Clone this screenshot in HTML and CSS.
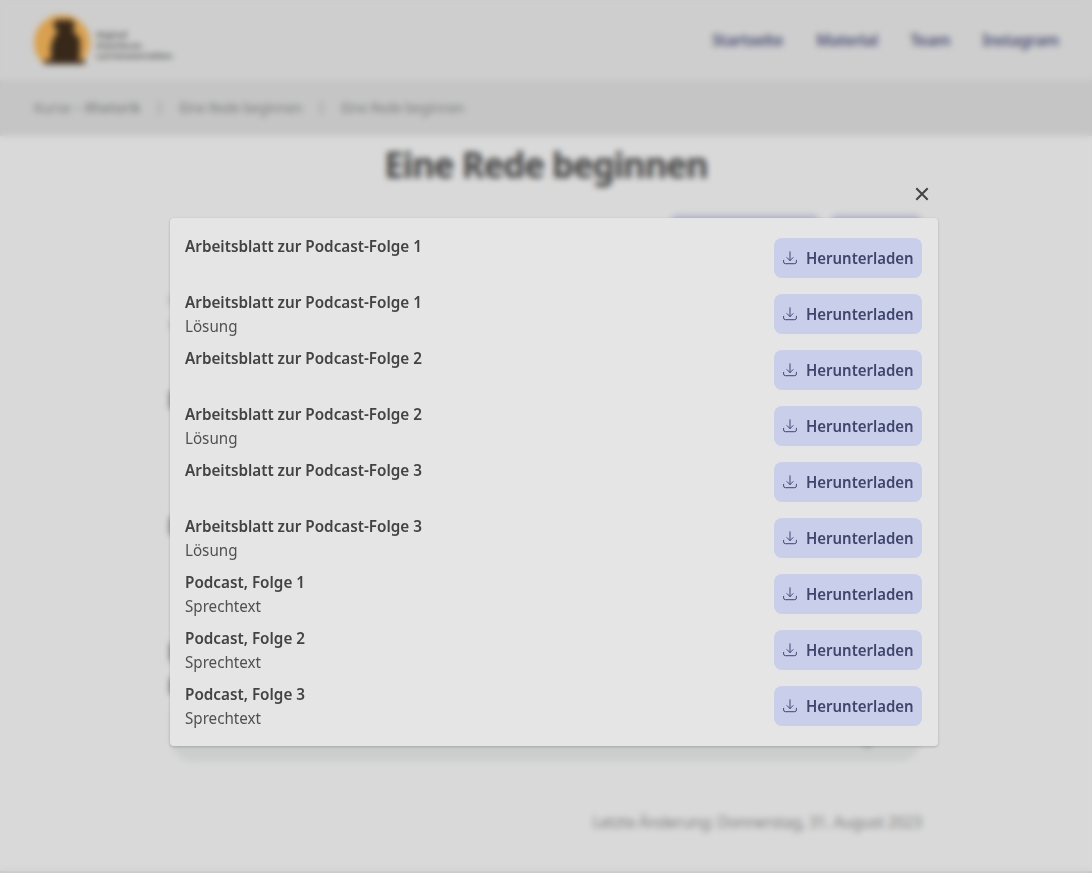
FILE: index.html
```html
<!DOCTYPE html>
<html lang="de">
<head>
<meta charset="utf-8">
<title>Eine Rede beginnen</title>
<link rel="stylesheet" href="styles.css">
</head>
<body>
<div class="page">
  <header class="header">
    <div class="logo">
      <svg width="58" height="52" viewBox="0 0 58 52"><path d="M9 48A28 28 0 1 1 47 48Z" fill="#d9a04f"/><path d="M10 49v-4h7V31l3-9 4-5-5-7 3-5h16l3 4-2 7 7 8v15l-2 6h7v4Z" fill="#37281a"/></svg>
      <div class="logo-text"><span>Digital</span><span>Plattform</span><span>Lernmaterialien</span></div>
    </div>
    <nav class="nav"><a class="n1">Startseite</a><a class="n2">Material</a><a class="n3">Team</a><a class="n4">Instagram</a></nav>
  </header>
  <div class="crumbs"><span class="c1">Kurse – <b>Rhetorik</b></span><i></i><span class="c2">Eine Rede beginnen</span><i></i><span class="c3">Eine Rede beginnen</span></div>
  <main class="main">
    <h1>Eine Rede beginnen</h1>
    <div class="actions"><span class="action wide"></span><span class="action"></span></div>
    <div class="content">
      <i class="edge e1"></i><i class="edge e2"></i><i class="edge e3 dark"></i><i class="edge e4 dark"></i><i class="edge e5 dark"></i><i class="edge e6 dark"></i>
    </div>
    <div class="card"><i></i></div>
    <p class="changed">Letzte Änderung: Donnerstag, 31. August 2023</p>
  </main>
  <footer class="footer"></footer>
</div>
<div class="overlay">
  <div class="dialog">
    <button class="close" aria-label="Schließen"><svg width="14" height="14" viewBox="0 0 14 14"><path d="M1.3 1.3 12.7 12.7M12.7 1.3 1.3 12.7"/></svg></button>
    <ul class="panel" id="files"></ul>
  </div>
</div>
<script src="app.js"></script>
</body>
</html>
```

FILE: styles.css
```css
* { box-sizing: border-box; }
body { margin: 0; height: 873px; overflow: hidden; background: #d9d9d9; color: #434343; font: 16px/24px "Noto Sans", sans-serif; }
.page { height: 873px; overflow: hidden; display: flex; flex-direction: column; }
.header { flex: 0 0 80px; background: #cecece; display: flex; justify-content: space-between; align-items: center; padding: 0 34px; }
.logo { display: flex; align-items: center; gap: 4px; padding-top: 1px; }
.logo-text { display: flex; flex-direction: column; font-size: 9.5px; line-height: 10.5px; font-weight: 700; color: #666; padding-top: 11px; }
.nav { display: flex; gap: 31px; font-weight: 700; color: #5c607f; }
.nav a { white-space: nowrap; letter-spacing: -.75px; }
.n1 { width: 73px; } .n2 { width: 63px; } .n3 { width: 41px; } .n4 { width: 76px; }
.crumbs { flex: 0 0 56px; background: #c5c5c5; display: flex; align-items: center; padding: 0 34px; font-size: 14px; color: #7d7f7f; white-space: nowrap; }
.crumbs span { letter-spacing: -.42px; }
.crumbs .c1 { width: 106px; letter-spacing: -.15px; }
.c2, .c3 { width: 123px; }
.crumbs i { width: 1px; height: 14px; margin: 0 19px; background: #808080; }
.crumbs b { font-weight: 500; }
.main { flex: 1; width: 752px; margin: 0 auto; display: flex; flex-direction: column; }
h1 { margin: 4px 0 0; font-size: 36px; line-height: 50px; font-weight: 700; text-align: center; white-space: nowrap; letter-spacing: -1px; transform: scaleX(.964); }
.actions { display: flex; justify-content: flex-end; gap: 10px; margin-top: 25px; }
.action { width: 92px; height: 40px; border-radius: 8px; background: #b3b4ca; }
.wide { width: 150px; }
.content { padding-top: 39px; display: flex; flex-direction: column; }
.edge { flex: none; width: 3px; height: 12px; background: #a8a8a8; }
.dark { width: 4px; height: 18px; background: #666; }
.e2 { margin-top: 14px; height: 10px; }
.e3 { margin-top: 61px; }
.e4, .e5 { margin-top: 108px; }
.e6 { margin-top: 17px; height: 16px; }
.card { flex: none; height: 68px; border-radius: 24px; background: #cccece; display: flex; justify-content: flex-end; align-items: flex-end; padding: 0 50px 15px; }
.card i { width: 9px; height: 3px; background: #999; }
.changed { margin: 48px 0 0; text-align: right; color: #858585; white-space: nowrap; letter-spacing: -.5px; }
.footer { flex: 0 0 2px; background: #c5c5c5; }
.overlay { position: fixed; inset: 0; backdrop-filter: blur(3.3px); padding: 180px 154px 0 170px; }
.dialog { display: flex; flex-direction: column; align-items: flex-end; }
.close { border: 0; background: none; padding: 0; margin: 7px 9px 17px; width: 14px; height: 14px; display: flex; }
.close path { fill: none; stroke: #434343; stroke-width: 2; }
.panel { list-style: none; width: 768px; height: 528px; margin: 0; padding: 16px 16px 16px 15px; background: #e5e5e5; border-radius: 4px; box-shadow: 0 1px 3px #0003; display: flex; flex-direction: column; }
.row { flex: 0 0 56px; display: flex; justify-content: space-between; }
.title, .sub, .label { display: block; white-space: nowrap; transform-origin: left center; }
.title { font-weight: 650; transform: scaleX(.954); }
.sub { color: #505050; transform: scaleX(.948); }
.download { width: 148px; height: 40px; margin-top: 4px; padding: 0 9px; border-radius: 8px; background: #c9ceea; color: #3f456c; font-weight: 650; display: flex; align-items: center; gap: 9px; }
.download svg { flex: none; fill: none; stroke: #404775; stroke-width: 1; stroke-linecap: round; stroke-linejoin: round; }
.label { width: 107px; transform: scaleX(.935); }
```

FILE: app.js
```js
const files = [
  ["Arbeitsblatt zur Podcast-Folge 1", ""],
  ["Arbeitsblatt zur Podcast-Folge 1", "Lösung"],
  ["Arbeitsblatt zur Podcast-Folge 2", ""],
  ["Arbeitsblatt zur Podcast-Folge 2", "Lösung"],
  ["Arbeitsblatt zur Podcast-Folge 3", ""],
  ["Arbeitsblatt zur Podcast-Folge 3", "Lösung"],
  ["Podcast, Folge 1", "Sprechtext"],
  ["Podcast, Folge 2", "Sprechtext"],
  ["Podcast, Folge 3", "Sprechtext"]
];
document.getElementById("files").innerHTML = files.map(([title, sub]) => `
  <li class="row">
    <div><span class="title">${title}</span><span class="sub">${sub}</span></div>
    <a class="download"><svg width="14" height="14" viewBox="0 0 14 14"><path d="M7 .8v8.7M4 6.6l3 3 3-3M.6 9.3v1.6q0 1.8 1.8 1.8h9.2q1.8 0 1.8-1.8V9.3"/></svg><span class="label">Herunterladen</span></a>
  </li>`).join("");
```
